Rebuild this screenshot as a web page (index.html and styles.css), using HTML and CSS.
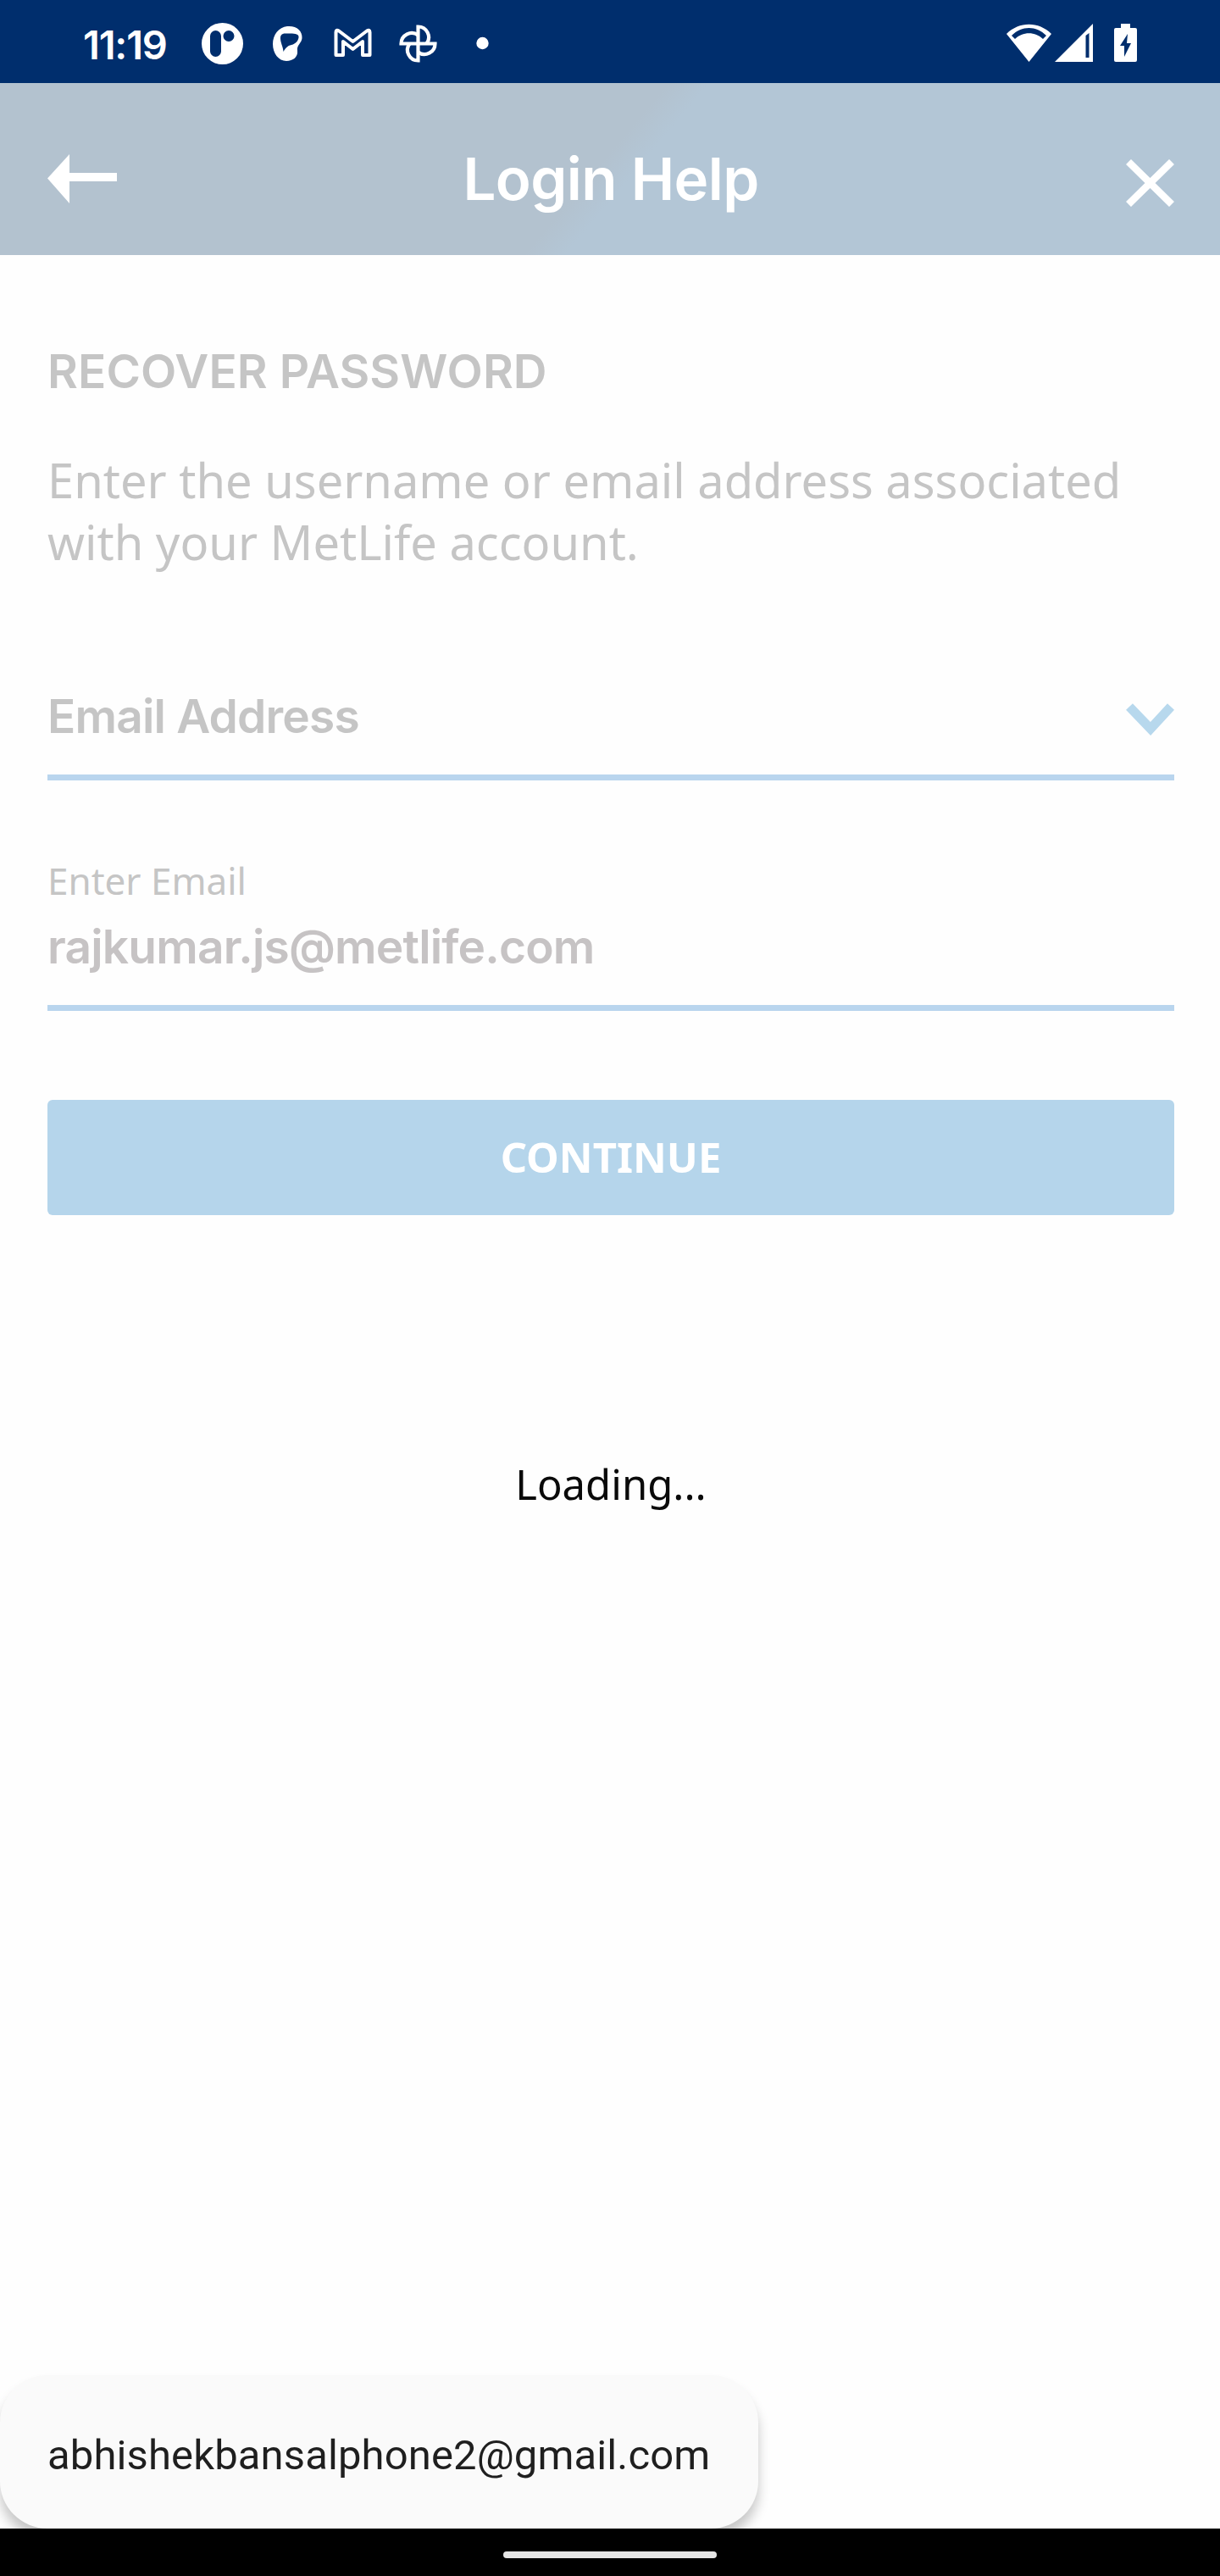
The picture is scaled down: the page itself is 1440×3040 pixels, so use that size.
FILE: index.html
```
<!DOCTYPE html>
<html lang="en">
<head>
<meta charset="utf-8">
<title>Login Help</title>
<link rel="stylesheet" href="styles.css">
</head>
<body>
<header class="status-bar">
  <span class="clock">11:19</span>
  <svg class="status-icons" width="400" height="98" viewBox="220 0 400 98" fill="#fff">
    <path fill-rule="evenodd" d="M262.500 27a24.500 24.500 0 1 0 0 49a24.500 24.500 0 1 0 0-49zM254.500 36h0a6.500 6.500 0 0 1 6.500 6.500v18a6.500 6.500 0 0 1-13 0v-18a6.500 6.500 0 0 1 6.500-6.500zM270 36a6.500 6.500 0 1 0 0 13a6.500 6.500 0 1 0 0-13z"/>
    <path fill-rule="evenodd" d="M339 31C350 30 357 36 356.500 45C356 51 350 53 351 60C352 67 346 72 338 72C329 72 322 63 322 52C322 41 329 32 339 31zM337 39.500C332 39.500 331 42 331 45C331 51 334 54 334.500 61C337 57 339 54 344 53C349 52 353 47 352.500 43C352 39 343 39.500 337 39.500z"/>
    <path fill="none" stroke="#fff" stroke-width="4" stroke-linejoin="round" d="M396.500 65V38Q396.500 34.500 400 36.500L416.500 49L433 36.500Q436.500 34.500 436.500 38V65H428V49L416.500 58L405 49V65z"/>
    <g fill="none" stroke="#fff" stroke-width="4.200">
      <path id="blade" d="M493.500 51.500V31.500A12.500 12.500 0 0 1 503.500 51.500"/>
      <use href="#blade" transform="rotate(90 493.500 51.500)"/>
      <use href="#blade" transform="rotate(180 493.500 51.500)"/>
      <use href="#blade" transform="rotate(270 493.500 51.500)"/>
    </g>
    <circle cx="569.500" cy="51" r="7.200"/>
  </svg>
  <svg class="system-icons" width="180" height="98" viewBox="1180 0 180 98" fill="#fff">
    <path fill-rule="evenodd" d="M1188 40C1203 25 1226 25 1241 40L1214.500 73zM1194 42L1198 46C1207 37 1222 37 1231 46L1235 42C1223 30 1206 30 1194 42z"/>
    <path fill-rule="evenodd" d="M1290 28V73H1245zM1281.500 42V68H1285.500V39z"/>
    <path fill-rule="evenodd" d="M1323 28H1334V33H1340Q1342 33 1342 35V71Q1342 73 1340 73H1317Q1315 73 1315 71V35Q1315 33 1317 33H1323zM1331 40L1322 54H1327V67L1335 51H1330z"/>
  </svg>
</header>
<div class="title-bar">
  <svg class="back" width="82" height="58" viewBox="0 0 82 58" fill="#fff"><path d="M0 28.500L26 0V22H82V32H26V58z"/></svg>
  <h1>Login Help</h1>
  <svg class="close" width="58" height="56" viewBox="0 0 58 56" stroke="#fff" stroke-width="8.500"><path d="M4 3L55 53M55 3L4 53"/></svg>
</div>
<main>
  <h2>RECOVER PASSWORD</h2>
  <p class="intro">Enter the username or email address associated<br>with your MetLife account.</p>
  <div class="field select">
    <span class="value">Email Address</span>
    <svg class="chevron" width="58" height="39" viewBox="0 0 58 39" fill="none" stroke="#b7d8ed" stroke-width="11"><path d="M5 4L30 30L54 4"/></svg>
  </div>
  <div class="field input">
    <span class="label">Enter Email</span>
    <span class="value mail">rajkumar.js@metlife.com</span>
  </div>
  <button class="continue">CONTINUE</button>
  <p class="loading">Loading...</p>
</main>
<div class="suggestion">abhishekbansalphone2@gmail.com</div>
<footer class="nav-bar"><span class="handle"></span></footer>
</body>
</html>
```
FILE: styles.css
```
* { box-sizing: border-box; margin: 0; padding: 0; }
body { width: 1440px; height: 3040px; display: flex; flex-direction: column; background: #fefefe; font-family: "Noto Sans", sans-serif; color: #c5c5c5; }
.status-bar { height: 98px; background: #002e6d; color: #fff; display: flex; align-items: center; padding: 0 80px 0 98px; }
.clock { width: 122px; font: 600 47px/98px Inter, sans-serif; padding-top: 7px; letter-spacing: -1.2px; }
.system-icons { margin-left: auto; }
.title-bar { height: 203px; padding: 22px 54px 0 56px; display: grid; grid-template-columns: 1fr auto 1fr; align-items: center; background: linear-gradient(130deg, #b3c2cf 49%, #b3c6d6 52%); color: #fff; }
.close { justify-self: end; margin-top: 10px; }
h1 { font: 600 69px/80px Inter, sans-serif; letter-spacing: -.6px; }
main { flex: 1; padding: 0 54px 0 56px; }
h2 { font: 600 55px/66px Inter, sans-serif; letter-spacing: .1px; margin-top: 104px; }
.intro { font-size: 56px; line-height: 73px; margin-top: 59px; }
.field { border-bottom: 7px solid #b9d5ee; }
.select { display: flex; justify-content: space-between; align-items: flex-start; height: 115px; padding-top: 6px; margin-top: 130px; }
.chevron { margin-top: 18px; }
.value { font: 600 55px/66px Inter, sans-serif; letter-spacing: -.82px; }
.input { margin-top: 88px; height: 184px; display: flex; flex-direction: column; }
.label { font-size: 44px; line-height: 60px; }
.mail { margin-top: 15px; color: #c6c3c4; }
.continue { display: block; width: 100%; height: 136px; margin-top: 105px; padding-bottom: 2px; border: 0; border-radius: 6px; background: #b5d5eb; color: #fff; font: 700 49px/66px "Noto Sans", sans-serif; }
.loading { margin-top: 284px; text-align: center; color: #0a0a0a; font-size: 49px; line-height: 66px; }
.suggestion { width: 895px; height: 181px; border-radius: 56px; background: #fafafa; padding: 4px 0 0 56px; color: #1f1f1f; font: 400 49px/181px Roboto, sans-serif; letter-spacing: .12px; box-shadow: 0 12px 14px rgba(0,0,0,.22); }
.nav-bar { position: relative; height: 56px; padding-top: 6px; background: #000; display: flex; align-items: center; justify-content: center; }
.handle { width: 252px; height: 8px; border-radius: 4px; background: #e6e6e6; }
```
